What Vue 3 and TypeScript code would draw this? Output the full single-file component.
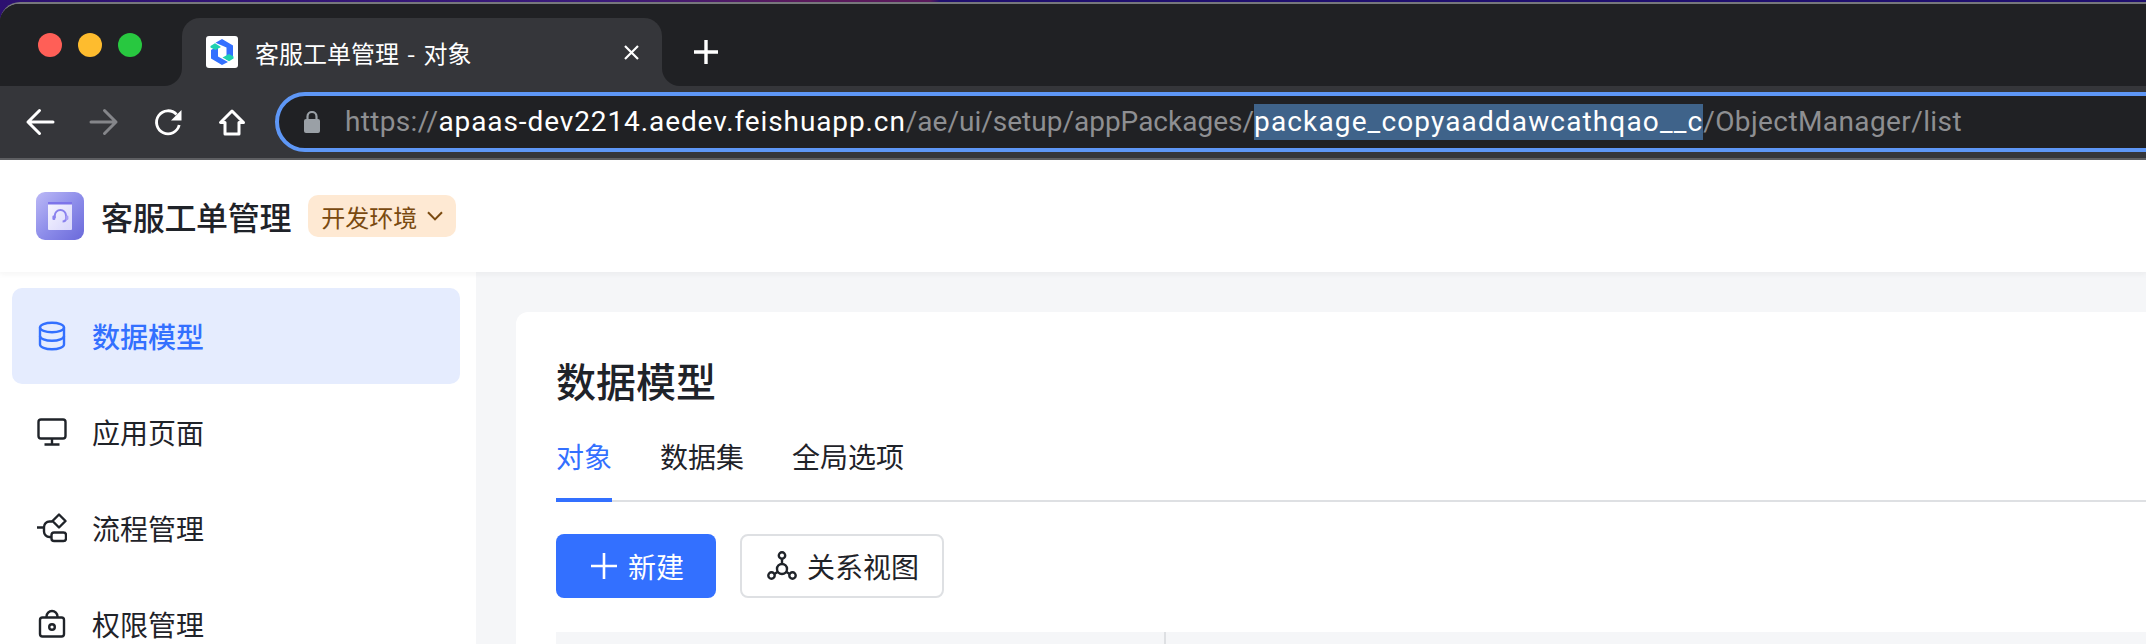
<script setup lang="ts">
const navItems = [
  { key: 'data', label: '数据模型', active: true },
  { key: 'page', label: '应用页面', active: false },
  { key: 'flow', label: '流程管理', active: false },
  { key: 'auth', label: '权限管理', active: false },
]
const tabs = [
  { label: '对象', active: true },
  { label: '数据集', active: false },
  { label: '全局选项', active: false },
]
</script>

<template>
  <div class="page">
    <header class="browser">
      <div class="window">
        <div class="tabstrip">
          <div class="lights">
            <span class="dot red"></span>
            <span class="dot yellow"></span>
            <span class="dot green"></span>
          </div>
          <div class="tab">
            <svg class="favicon" width="32" height="32" viewBox="0 0 32 32">
              <rect width="32" height="32" rx="3" fill="#fff" />
              <path d="M9.5 6.8 16 3 27 9.5V20L20.5 24V11.5Z" fill="#3370ff" />
              <path d="M5 14 12 10V20.5L22 26 16 29 5 22.5Z" fill="#3370ff" />
              <path d="M4.5 10 9 7.3 15 11 9.5 14 4.5 11.5Z" fill="#1fd1b0" />
              <path d="M16.5 21.5 23 18 27.5 20.5V22.5L23 25.2Z" fill="#1fd1b0" />
            </svg>
            <span class="tab-title">客服工单管理 - 对象</span>
            <svg class="tab-close" width="15" height="15" viewBox="0 0 15 15">
              <path d="M1 1 14 14M14 1 1 14" stroke="#fff" stroke-width="2.2" />
            </svg>
          </div>
          <div class="rest">
            <svg width="26" height="26" viewBox="0 0 26 26">
              <path d="M13 1V25M1 13H25" stroke="#fff" stroke-width="3.4" />
            </svg>
          </div>
        </div>
        <div class="toolbar">
          <button class="tool">
            <svg width="32" height="32" viewBox="0 0 32 32" fill="none" stroke="#fff" stroke-width="3" stroke-linecap="round" stroke-linejoin="round">
              <path d="M29 16H4M15.5 4.5 4 16 15.5 27.5" />
            </svg>
          </button>
          <button class="tool">
            <svg width="32" height="32" viewBox="0 0 32 32" fill="none" stroke="#85868a" stroke-width="3" stroke-linecap="round" stroke-linejoin="round">
              <path d="M3 16H28M16.5 4.5 28 16 16.5 27.5" />
            </svg>
          </button>
          <button class="tool">
            <svg width="32" height="32" viewBox="0 0 32 32" fill="none" stroke="#fff" stroke-width="2.8">
              <path d="M24.5 8.5A11.5 11.5 0 1 0 27.2 19" />
              <path d="M29.5 4V14.5H19Z" fill="#fff" stroke="none" />
            </svg>
          </button>
          <button class="tool">
            <svg width="32" height="32" viewBox="0 0 32 32" fill="none" stroke="#fff" stroke-width="3" stroke-linejoin="round">
              <path d="M16 5 4.5 16.5H9V28H23V16.5H27.5Z" />
            </svg>
          </button>
          <div class="urlbar">
            <svg class="lock" width="16" height="22" viewBox="0 0 16 22">
              <rect y="8" width="16" height="14" rx="2" fill="#9aa0a6" />
              <path d="M3.5 9V5.5a4.5 4.5 0 0 1 9 0V9" fill="none" stroke="#9aa0a6" stroke-width="2.2" />
            </svg>
            <div class="url"><span class="dim first">https://</span><span class="host">apaas-dev2214.aedev.feishuapp.cn</span><span class="dim">/ae/ui/setup/appPackages/</span><span class="sel">package_copyaaddawcathqao__c</span><span class="dim last">/ObjectManager/list</span></div>
          </div>
        </div>
      </div>
    </header>

    <section class="app-head">
      <svg class="logo" width="48" height="48" viewBox="0 0 48 48">
        <defs>
          <linearGradient id="logoBg" x1="0" y1="0" x2="1" y2="1">
            <stop offset="0" stop-color="#bcb9f6" />
            <stop offset="0.5" stop-color="#8e8eea" />
            <stop offset="1" stop-color="#6a69da" />
          </linearGradient>
          <linearGradient id="logoPage" x1="0" y1="0" x2="1" y2="1">
            <stop offset="0" stop-color="#f6f5ff" />
            <stop offset="1" stop-color="#d8d6fb" />
          </linearGradient>
        </defs>
        <rect width="48" height="48" rx="9" fill="url(#logoBg)" />
        <rect x="12" y="10" width="24" height="28" rx="1" fill="url(#logoPage)" />
        <rect x="12" y="10" width="24" height="2.5" fill="#7d74ea" />
        <path d="M18.8 26v-2.4a5.6 5.6 0 0 1 11.2 0v3.2c0 1.6-1.4 2.7-3.4 2.7" fill="none" stroke="#8a82ee" stroke-width="2" />
        <rect x="16.4" y="23.6" width="3" height="4.4" rx="1.2" fill="#8a82ee" />
        <rect x="29.4" y="23.6" width="3" height="4.4" rx="1.2" fill="#a79cf5" />
      </svg>
      <h1 class="app-name">客服工单管理</h1>
      <div class="env-tag">
        <span>开发环境</span>
        <svg width="16" height="10" viewBox="0 0 16 10" fill="none" stroke="#7a4a10" stroke-width="2">
          <path d="M1 1.2 8 8.4 15 1.2" />
        </svg>
      </div>
    </section>

    <div class="body">
      <nav class="sidebar">
        <a v-for="item in navItems" :key="item.key" class="nav-item" :class="{ active: item.active }">
          <svg class="nav-icon" width="30" height="30" viewBox="0 0 30 30" fill="none" stroke="currentColor" stroke-width="2.4">
            <template v-if="item.key === 'data'">
              <ellipse cx="15" cy="6.5" rx="12" ry="4.8" />
              <path d="M3 6.5V23.5C3 26.1 8.4 28.3 15 28.3S27 26.1 27 23.5V6.5" />
              <path d="M3 15C3 17.6 8.4 19.8 15 19.8S27 17.6 27 15" />
            </template>
            <template v-else-if="item.key === 'page'">
              <rect x="1.5" y="2.5" width="27" height="19" rx="2.5" />
              <path d="M15 21.5V27M7.5 27.5H22.5" />
            </template>
            <template v-else-if="item.key === 'flow'">
              <path d="M22 1.5 28.5 8 22 14.5 15.5 8Z" stroke-linejoin="round" />
              <rect x="14.5" y="19.5" width="14.5" height="8.5" rx="2.6" />
              <path d="M0 14.5H7M15.5 8.5H12.5A5.5 5.5 0 0 0 7 14V18.5A5.5 5.5 0 0 0 12.5 24H14.5" />
            </template>
            <template v-else>
              <rect x="3" y="8.5" width="24" height="19" rx="2.5" />
              <path d="M9.5 8.5V7.5A5.5 5.5 0 0 1 20.5 7.5V8.5" />
              <circle cx="15" cy="18" r="2.8" />
            </template>
          </svg>
          <span>{{ item.label }}</span>
        </a>
      </nav>

      <main class="main">
        <div class="card">
          <h2 class="title">数据模型</h2>
          <div class="tabs">
            <div v-for="t in tabs" :key="t.label" class="tab-link" :class="{ on: t.active }">{{ t.label }}</div>
          </div>
          <div class="actions">
            <button class="btn primary">
              <svg width="26" height="26" viewBox="0 0 26 26">
                <path d="M13 0V26M0 13H26" stroke="#fff" stroke-width="2.6" />
              </svg>
              <span>新建</span>
            </button>
            <button class="btn outline">
              <svg width="30" height="30" viewBox="0 0 30 30" fill="none" stroke="#1f2329" stroke-width="2.4">
                <circle cx="15" cy="4.5" r="3.2" />
                <circle cx="4.5" cy="24.5" r="3.2" />
                <circle cx="25.5" cy="24.5" r="3.2" />
                <circle cx="15" cy="18" r="5" />
                <path d="M15 7.7V13M7.4 22.9 10.8 20.7M22.6 22.9 19.2 20.7" />
              </svg>
              <span>关系视图</span>
            </button>
          </div>
          <div class="table-head">
            <div class="col-first"></div>
            <div class="col-rest"></div>
          </div>
        </div>
      </main>
    </div>
  </div>
</template>

<style>
html, body { margin: 0; background: #fff; }
</style>

<style scoped>
.page {
  width: 2146px;
  height: 644px;
  overflow: hidden;
  display: flex;
  flex-direction: column;
  font-family: "Noto Sans CJK SC", "Noto Sans", sans-serif;
  color: #1f2329;
}
.browser {
  height: 160px;
  flex: none;
  padding-top: 2px;
  box-sizing: border-box;
  background: linear-gradient(90deg, #2c1070 0, #3a1a7a 600px, #5a1a5c 800px, #5a1a5c 930px, #1f0f6e 940px, #1f0f6e 100%);
}
.window {
  height: 158px;
  box-sizing: border-box;
  border-top: 2px solid #77787c;
  border-top-left-radius: 20px;
  overflow: hidden;
  background: #202124;
}
.tabstrip {
  height: 82px;
  display: flex;
  background: linear-gradient(#202124 0 60%, #35363a 60%);
}
.lights {
  width: 182px;
  box-sizing: border-box;
  padding-left: 38px;
  display: flex;
  align-items: center;
  gap: 16px;
  background: #202124;
  border-bottom-right-radius: 18px;
}
.dot { width: 24px; height: 24px; border-radius: 50%; }
.red { background: #ff5f57; }
.yellow { background: #febc2e; }
.green { background: #28c840; }
.tab {
  width: 480px;
  height: 68px;
  margin-top: 14px;
  box-sizing: border-box;
  padding: 0 23px 0 24px;
  display: flex;
  align-items: center;
  background: #35363a;
  border-radius: 18px 18px 0 0;
}
.favicon { flex: none; }
.tab-title {
  margin-left: 17px;
  font-size: 24px;
  word-spacing: 2.7px;
  color: #fff;
  white-space: nowrap;
}
.tab-close { margin-left: auto; }
.rest {
  flex: 1;
  box-sizing: border-box;
  padding: 14px 0 0 31px;
  display: flex;
  align-items: center;
  background: #202124;
  border-bottom-left-radius: 18px;
}
.toolbar {
  height: 72px;
  display: flex;
  align-items: center;
  padding-left: 8px;
  background: #35363a;
  border-bottom: 2px solid #5f6063;
}
.tool {
  width: 64px;
  height: 60px;
  flex: none;
  padding: 0;
  border: 0;
  background: none;
  display: flex;
  align-items: center;
  justify-content: center;
}
.urlbar {
  flex: 1;
  height: 60px;
  margin-left: 11px;
  margin-right: -40px;
  box-sizing: border-box;
  padding-left: 25px;
  display: flex;
  align-items: center;
  background: #202124;
  border: 4px solid #5e97f6;
  border-radius: 30px;
}
.lock { flex: none; }
.url {
  margin-left: 25px;
  font-family: Roboto, "Liberation Sans", sans-serif;
  font-size: 28px;
  line-height: 36px;
  white-space: nowrap;
}
.dim { color: #8e8f92; }
.first { letter-spacing: 0.34px; }
.last { letter-spacing: 0.4px; }
.host { color: #fff; letter-spacing: 0.9px; }
.sel { color: #fff; background: #3f638a; display: inline-block; letter-spacing: 1.14px; }
.app-head {
  height: 112px;
  flex: none;
  position: relative;
  z-index: 1;
  box-sizing: border-box;
  padding-left: 36px;
  display: flex;
  align-items: center;
  background: #fff;
  box-shadow: 0 2px 6px rgba(31, 35, 41, 0.05);
}
.logo { flex: none; }
.app-name {
  margin: 0 0 0 17px;
  font-size: 32px;
  font-weight: 500;
  line-height: 44px;
  letter-spacing: -0.3px;
}
.env-tag {
  margin-left: 17px;
  height: 42px;
  box-sizing: border-box;
  padding: 0 13px 0 13px;
  display: flex;
  align-items: center;
  gap: 10px;
  font-size: 24px;
  color: #7a4a10;
  background: #fee9d3;
  border-radius: 10px;
}
.body { flex: 1; display: flex; min-height: 0; }
.sidebar {
  width: 476px;
  flex: none;
  box-sizing: border-box;
  padding: 16px 16px 0 12px;
  background: #fff;
}
.nav-item {
  height: 96px;
  box-sizing: border-box;
  padding-left: 25px;
  display: flex;
  align-items: center;
  gap: 25px;
  font-size: 28px;
  border-radius: 10px;
}
.nav-item.active {
  background: #e5ecfe;
  color: #3370ff;
  font-weight: 500;
}
.main {
  flex: 1;
  min-width: 0;
  padding: 40px 0 0 40px;
  background: #f5f6f8;
}
.card {
  background: #fff;
  border-radius: 12px 0 0 0;
  padding: 40px 0 0 40px;
  height: 100%;
}
.title {
  margin: 0;
  font-size: 40px;
  font-weight: 500;
  line-height: 56px;
}
.tabs {
  display: flex;
  gap: 48px;
  border-bottom: 2px solid #dee0e3;
}
.tab-link {
  padding: 26px 0 20px;
  margin-bottom: -2px;
  font-size: 28px;
  line-height: 44px;
  border-bottom: 4px solid transparent;
}
.tab-link.on {
  color: #3370ff;
  border-bottom-color: #3370ff;
}
.actions {
  margin-top: 32px;
  display: flex;
  gap: 24px;
}
.btn {
  height: 64px;
  box-sizing: border-box;
  display: flex;
  align-items: center;
  justify-content: flex-start;
  font-family: inherit;
  font-size: 28px;
  border-radius: 8px;
}
.primary {
  width: 160px;
  padding: 0 0 0 35px;
  gap: 11px;
  color: #fff;
  background: #3370ff;
  border: 0;
}
.outline {
  width: 204px;
  padding: 0 0 0 25px;
  gap: 10px;
  color: #1f2329;
  background: #fff;
  border: 2px solid #dee0e3;
}
.table-head {
  margin-top: 34px;
  height: 64px;
  display: flex;
  background: #f5f6f8;
}
.col-first {
  width: 608px;
  flex: none;
  border-right: 2px solid #dee0e3;
}
.col-rest { flex: 1; }
</style>
